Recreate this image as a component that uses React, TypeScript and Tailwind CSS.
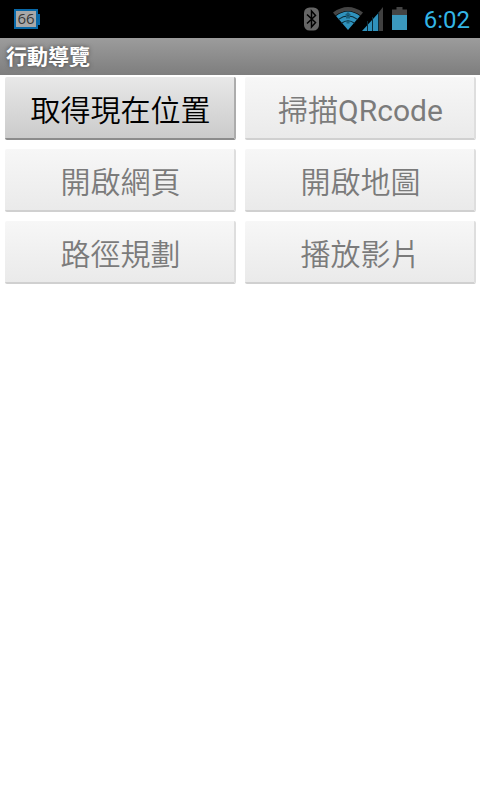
const buttons = [
  { label: "取得現在位置", enabled: true },
  { label: "掃描QRcode", enabled: false },
  { label: "開啟網頁", enabled: false },
  { label: "開啟地圖", enabled: false },
  { label: "路徑規劃", enabled: false },
  { label: "播放影片", enabled: false },
]

function BatteryPercent() {
  return (
    <div className="flex">
      <div className="flex h-5 w-[24px] items-center justify-center border-2 border-[#0868a8] bg-[#a8a8a8] pb-px font-['Open_Sans','Roboto',sans-serif] text-[15px] leading-none font-medium text-[#383838]">
        66
      </div>
      <div className="my-auto h-[11px] w-[2px] bg-[#0868a8]" />
    </div>
  )
}

function BluetoothIcon() {
  return (
    <svg width="15" height="24" viewBox="0 0 15 24">
      <rect x="0" y="0.5" width="15" height="23" rx="5.5" fill="#666" />
      <path d="M3 7.5 L11.5 15.5 L7.5 20 V4 L11.5 8.5 L3 16.5" fill="none" stroke="#000" strokeWidth="1.5" />
    </svg>
  )
}

function WifiIcon() {
  return (
    <svg width="30" height="24" viewBox="0 0 30 24">
      <path d="M0 5.5 Q15 -5.5 30 5.5 L27.6 8.6 Q15 -0.6 2.4 8.6 Z" fill="#444" />
      <path d="M3 9 Q15 0 27 9 L15 23 Z" fill="#2f92bd" />
      <path d="M5.5 12.4 Q15 5.4 24.5 12.4 M8.5 16.2 Q15 11.4 21.5 16.2" fill="none" stroke="#092b38" strokeWidth="1.1" />
      <path d="M15 5 L18 8 H12 Z M13 9 H17 V11.5 H13 Z M13.5 14 H16.5 V16.5 H13.5 Z" fill="#1b607d" />
    </svg>
  )
}

function SignalIcon() {
  return (
    <svg width="22" height="24" viewBox="0 0 22 24">
      <path d="M0 24 L16 6.5 V24 Z" fill="#2f92bd" />
      <path d="M17 5 L21 0 V24 H17 Z" fill="#404040" />
      <path d="M5.5 14 V24 M10.5 10 V24 M16.5 5 V24" stroke="#0a2c3a" strokeWidth="1" />
    </svg>
  )
}

function BatteryIcon() {
  return (
    <svg width="16" height="24" viewBox="0 0 16 24">
      <path d="M4.5 0 H10.5 V2.5 H15 V8 H0 V2.5 H4.5 Z" fill="#444" />
      <path d="M0 8 H15 V23 H0 Z" fill="#3b98bd" />
    </svg>
  )
}

export default function App() {
  return (
    <div className="flex h-[800px] w-[480px] flex-col overflow-hidden bg-white font-['Roboto','Noto_Sans_CJK_TC',sans-serif]">
      <header className="flex h-[38px] shrink-0 items-center bg-black pr-[10px] pl-[14px]">
        <BatteryPercent />
        <div className="ml-auto flex items-center">
          <BluetoothIcon />
          <div className="ml-[14px]">
            <WifiIcon />
          </div>
          <div className="-ml-px">
            <SignalIcon />
          </div>
          <div className="ml-2">
            <BatteryIcon />
          </div>
          <span className="ml-4 pt-[2px] text-2xl leading-none text-[#33b5e5]">6:02</span>
        </div>
      </header>

      <h1 className="flex h-[37px] shrink-0 items-center bg-linear-to-b from-[#9c9c9c] to-[#7e7e7e] pt-px pl-[6px] text-[21px] leading-none font-bold text-white [text-shadow:0_0_4px_#444]">
        行動導覽
      </h1>

      <main className="grid grid-cols-2 gap-x-[9px] gap-y-[9px] pt-[2px] pr-1 pl-[5px]">
        {buttons.map((button) => (
          <button
            key={button.label}
            disabled={!button.enabled}
            className={`flex h-[63px] items-center justify-center rounded-[2px] border-r-2 border-b-2 pt-[6px] pl-[2px] font-['Roboto','Noto_Sans_CJK_TC_DemiLight','Noto_Sans_CJK_TC',sans-serif] text-[30px] leading-none ${
              button.enabled
                ? "border-r-[#acacac] border-b-[#8c8c8c] bg-linear-to-b from-[#e8e8e8] to-[#cbcbcb] text-black"
                : "border-r-[#dedede] border-b-[#d0d0d0] bg-linear-to-b from-[#f7f7f7] to-[#eaeaea] text-[#7b7b7b]"
            }`}
          >
            {button.label}
          </button>
        ))}
      </main>
    </div>
  )
}
